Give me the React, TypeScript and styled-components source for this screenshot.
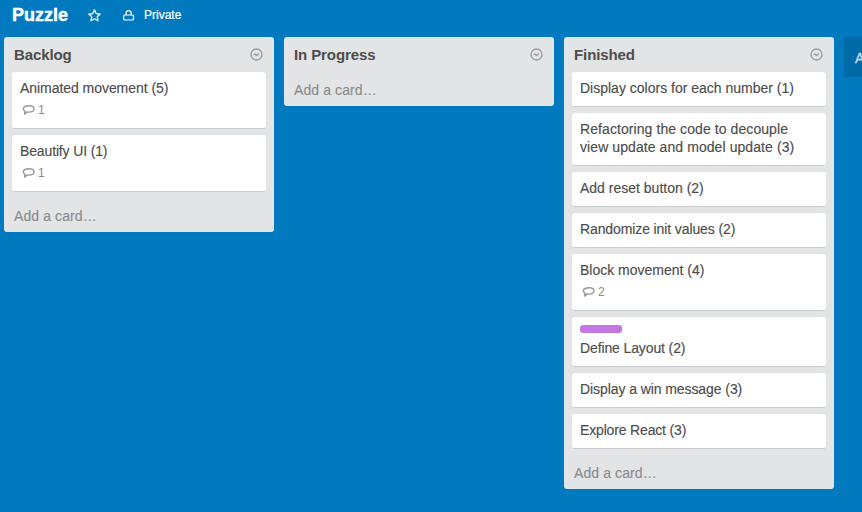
import React from "react";
import styled, { createGlobalStyle } from "styled-components";

const GlobalStyle = createGlobalStyle`
  * { box-sizing: border-box; }
  html, body { margin: 0; height: 100%; overflow: hidden; background: #0079bf; }
  body {
    font-family: "Liberation Sans", Arial, Helvetica, sans-serif;
    font-size: 14px;
    line-height: 18px;
    color: #4d4d4d;
  }
`;

const Board = styled.main`
  display: flex;
  flex-direction: column;
  width: 100%;
  height: 512px;
  overflow: hidden;
  background: #0079bf;
`;

const BoardHeader = styled.header`
  display: flex;
  align-items: center;
  flex: none;
  height: 37px;
  padding: 0 12px 7px;
  color: #fff;
`;

const BoardTitle = styled.h1`
  width: 76px;
  margin: 0;
  font-size: 18px;
  line-height: 24px;
  -webkit-text-stroke: 0.4px #fff;
`;

const HeaderIcon = styled.svg<{ $gap: number }>`
  flex: none;
  width: 13px;
  height: 13px;
  margin-right: ${(p) => p.$gap}px;
  fill: none;
  stroke: #fff;
`;

const Visibility = styled.span`
  font-size: 12px;
  -webkit-text-stroke: 0.2px #fff;
`;

const Lists = styled.div`
  display: flex;
  align-items: flex-start;
  gap: 10px;
  padding-left: 4px;
`;

const ListPanel = styled.section`
  flex: none;
  width: 270px;
  border-radius: 3px;
  background: #e2e4e6;
`;

const ListHeader = styled.div`
  display: flex;
  align-items: center;
  justify-content: space-between;
  height: 35px;
  padding: 0 11px 0 10px;
`;

const ListTitle = styled.h2`
  margin: 0;
  font-size: 15px;
  line-height: 18px;
  letter-spacing: -0.1px;
`;

const MenuIcon = styled.svg`
  width: 13px;
  height: 13px;
  fill: none;
  stroke: #999;
`;

const Cards = styled.div`
  padding: 0 8px;
`;

const CardBox = styled.article`
  margin-bottom: 6px;
  padding: 7px 8px 9px;
  border-bottom: 1px solid #c9cccf;
  border-radius: 3px;
  background: #fff;
`;

const TitleLine = styled.p<{ $spacing: number }>`
  margin: 0;
  white-space: nowrap;
  letter-spacing: ${(p) => p.$spacing}px;
  -webkit-text-stroke: 0.15px #4d4d4d;
`;

const Label = styled.div`
  width: 42px;
  height: 8px;
  margin: 1px 0 6px;
  border-radius: 3px;
  background: #c377e0;
`;

const Badge = styled.div`
  display: flex;
  align-items: center;
  gap: 2px;
  height: 18px;
  margin: 4px 0 0 2px;
  font-size: 12px;
  color: #8c8c8c;
`;

const BubbleIcon = styled.svg`
  width: 14px;
  height: 12px;
  fill: none;
  stroke: #999;
`;

const AddCard = styled.div`
  height: 34px;
  padding: 9px 10px 7px;
  letter-spacing: 0.1px;
  color: #8c8c8c;
  -webkit-text-stroke: 0.15px #8c8c8c;
`;

const AddList = styled.div`
  flex: none;
  width: 270px;
  height: 40px;
  padding: 12px 11px;
  border-radius: 3px;
  background: #006aa7;
  color: #c4dcea;
  -webkit-text-stroke: 0.4px #c4dcea;
`;

type CardData = {
  lines: string[];
  comments?: number;
  labelled?: boolean;
  spacing?: number;
};

const lists: { name: string; cards: CardData[] }[] = [
  {
    name: "Backlog",
    cards: [
      { lines: ["Animated movement (5)"], comments: 1, spacing: -0.05 },
      { lines: ["Beautify UI (1)"], comments: 1, spacing: -0.14 },
    ],
  },
  { name: "In Progress", cards: [] },
  {
    name: "Finished",
    cards: [
      { lines: ["Display colors for each number (1)"] },
      {
        lines: ["Refactoring the code to decouple", "view update and model update (3)"],
        spacing: 0.08,
      },
      { lines: ["Add reset button (2)"] },
      { lines: ["Randomize init values (2)"], spacing: -0.11 },
      { lines: ["Block movement (4)"], comments: 2 },
      { lines: ["Define Layout (2)"], labelled: true, spacing: -0.12 },
      { lines: ["Display a win message (3)"], spacing: -0.08 },
      { lines: ["Explore React (3)"], spacing: -0.16 },
    ],
  },
];

function Card({ lines, comments, labelled, spacing = 0 }: CardData) {
  return (
    <CardBox>
      {labelled && <Label />}
      {lines.map((line) => (
        <TitleLine key={line} $spacing={spacing}>
          {line}
        </TitleLine>
      ))}
      {comments !== undefined && (
        <Badge>
          <BubbleIcon viewBox="0 0 14 12">
            <path
              d="M7.200 1.700C10.500 1.700 12 2.900 12 4.700c0 2.200-2.200 3.400-5 3.400-.7 0-1.200-.1-1.700-.2L2.600 10.100l.4-2.900C1.900 6.700 1.300 6 1.300 5.100 1.300 3 3.700 1.700 7.200 1.700Z"
              strokeWidth="1.4"
              strokeLinejoin="round"
            />
          </BubbleIcon>
          {comments}
        </Badge>
      )}
    </CardBox>
  );
}

export default function App() {
  return (
    <>
      <GlobalStyle />
      <Board>
        <BoardHeader>
          <BoardTitle>Puzzle</BoardTitle>
          <HeaderIcon $gap={21} viewBox="0 0 12 12">
            <path
              d="M6 .8 7.550 4.250 11.300 4.650 8.500 7.150 9.300 10.900 6 9 2.700 10.900 3.500 7.150.7 4.650 4.450 4.250Z"
              strokeWidth="1.1"
              strokeLinejoin="round"
            />
          </HeaderIcon>
          <HeaderIcon $gap={9} viewBox="0 0 13 13">
            <path d="M4 6V4.300a2.600 2.600 0 0 1 5.200 0V6" strokeWidth="1.2" />
            <rect x="1.700" y="6" width="9.800" height="5" rx="1" strokeWidth="1.2" />
          </HeaderIcon>
          <Visibility>Private</Visibility>
        </BoardHeader>
        <Lists>
          {lists.map((list) => (
            <ListPanel key={list.name}>
              <ListHeader>
                <ListTitle>{list.name}</ListTitle>
                <MenuIcon viewBox="0 0 13 13">
                  <circle cx="6.500" cy="6.500" r="5.500" strokeWidth="1.300" />
                  <path d="M4.200 5.500 6.500 7.500 8.800 5.500" strokeWidth="1.500" />
                </MenuIcon>
              </ListHeader>
              <Cards>
                {list.cards.map((card) => (
                  <Card key={card.lines[0]} {...card} />
                ))}
              </Cards>
              <AddCard>Add a card…</AddCard>
            </ListPanel>
          ))}
          <AddList>Add a list…</AddList>
        </Lists>
      </Board>
    </>
  );
}
